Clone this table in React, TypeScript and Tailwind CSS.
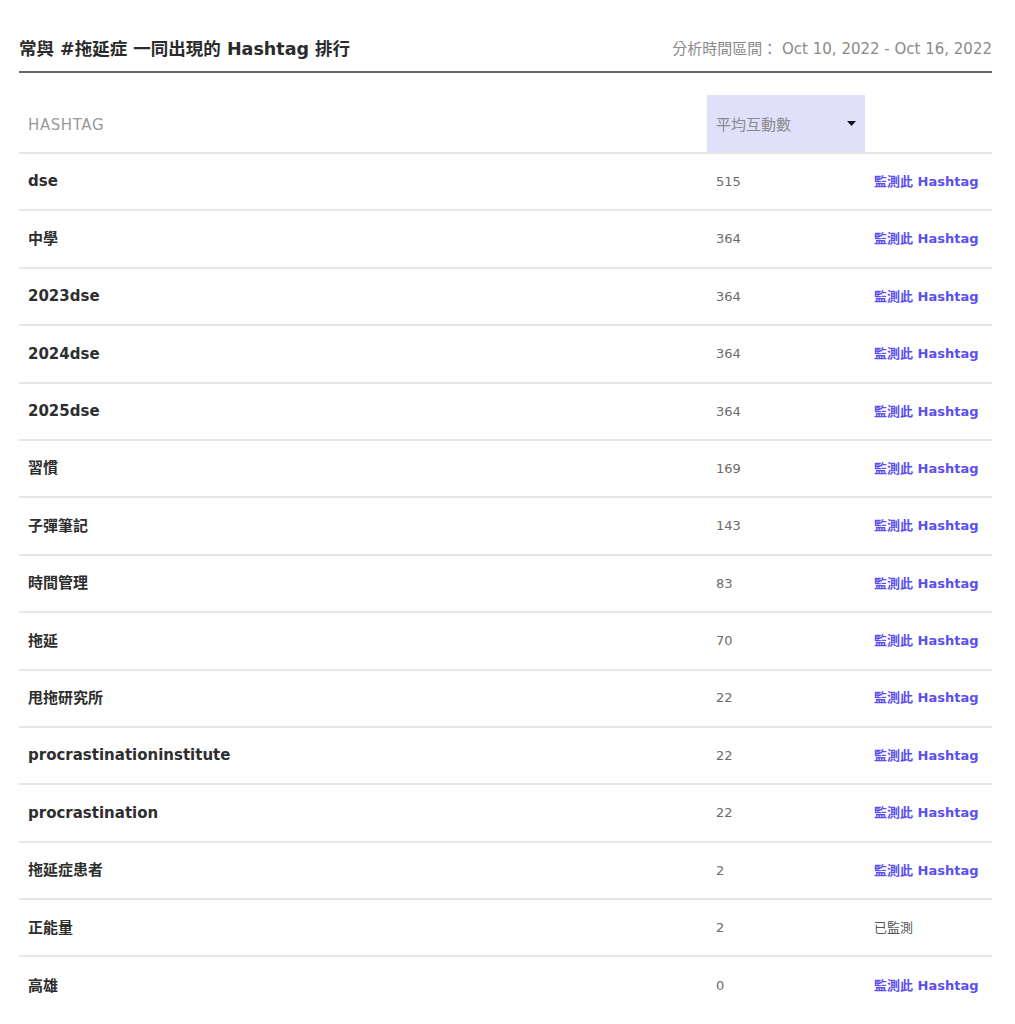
import React from "react";

interface Row {
  tag: string;
  avg: number;
  monitored?: boolean;
}

const ROWS: Row[] = [
  { tag: "dse", avg: 515 },
  { tag: "中學", avg: 364 },
  { tag: "2023dse", avg: 364 },
  { tag: "2024dse", avg: 364 },
  { tag: "2025dse", avg: 364 },
  { tag: "習慣", avg: 169 },
  { tag: "子彈筆記", avg: 143 },
  { tag: "時間管理", avg: 83 },
  { tag: "拖延", avg: 70 },
  { tag: "甩拖研究所", avg: 22 },
  { tag: "procrastinationinstitute", avg: 22 },
  { tag: "procrastination", avg: 22 },
  { tag: "拖延症患者", avg: 2 },
  { tag: "正能量", avg: 2, monitored: true },
  { tag: "高雄", avg: 0 },
];

const FONT = {
  fontFamily: '"DejaVu Sans", "Noto Sans CJK TC", sans-serif',
};

export default function App() {
  return (
    <div className="min-h-screen bg-white pt-[31px] pl-[19px] pr-[23px]" style={FONT}>
      {/* Header */}
      <div className="flex items-center justify-between h-[42px] border-b-2 border-[#666666]">
        <h2 className="text-[17.5px] font-bold text-[#2b2b2b] pb-[3px]">
          常與 #拖延症 一同出現的 Hashtag 排行
        </h2>
        <span className="text-[15px] text-[#8a8a8a] pb-[3px]">
          分析時間區間： Oct 10, 2022 - Oct 16, 2022
        </span>
      </div>

      {/* Table */}
      <div className="mt-[22px]">
        <div className="grid grid-cols-[688px_158px_127px] h-[59px] border-b-2 border-[#e6e6e6] text-[15px] text-[#999999]">
          <div className="pl-[9px] pt-[4px] flex items-center tracking-[0.6px]">HASHTAG</div>
          <div className="flex items-center justify-between pl-[9px] pr-[9px] pt-[4px] bg-[#e1e0fb] text-[#8a8a8a]">
            <span>平均互動數</span>
            <svg width="9" height="5" viewBox="0 0 9 5" className="-mt-[4px]">
              <path d="M0 0h9L4.5 5z" fill="#111" />
            </svg>
          </div>
          <div />
        </div>

        {ROWS.map((r, i) => (
          <div
            key={r.tag}
            className={`grid grid-cols-[688px_158px_127px] h-[57.4px] items-center ${
              i < ROWS.length - 1 ? "border-b-2 border-[#e6e6e6]" : ""
            }`}
          >
            <div className="pl-[9px] text-[15px] font-bold text-[#2e2e2e]">{r.tag}</div>
            <div className="pl-[9px] text-[13px] text-[#6b6b6b]">{r.avg}</div>
            <div className="pl-[9px] text-[13px]">
              {r.monitored ? (
                <span className="text-[#555555]">已監測</span>
              ) : (
                <span className="text-[#5a4ff0] font-semibold">監測此 Hashtag</span>
              )}
            </div>
          </div>
        ))}
      </div>
    </div>
  );
}
